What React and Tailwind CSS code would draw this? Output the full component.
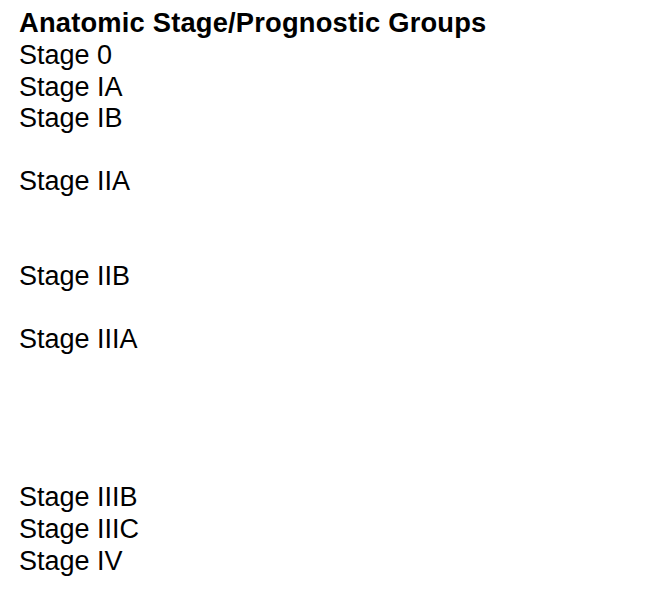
import React from 'react';

const rows = [
  'Stage 0',
  'Stage IA',
  'Stage IB',
  '',
  'Stage IIA',
  '',
  '',
  'Stage IIB',
  '',
  'Stage IIIA',
  '',
  '',
  '',
  '',
  'Stage IIIB',
  'Stage IIIC',
  'Stage IV',
];

const App = () => {
  return (
    <div
      className="w-[670px] h-[597px] bg-white text-black pt-[6px] pl-[19px]"
      style={{ fontFamily: '"Liberation Sans", Arial, sans-serif' }}
    >
      <div className="text-[27.3px] font-bold leading-[34px] tracking-[0.2px]">
        Anatomic Stage/Prognostic Groups
      </div>
      {rows.map((row, i) => (
        <div key={i} className="text-[27px] leading-[31.6px] h-[31.6px]">
          {row}
        </div>
      ))}
    </div>
  );
};

export default App;
